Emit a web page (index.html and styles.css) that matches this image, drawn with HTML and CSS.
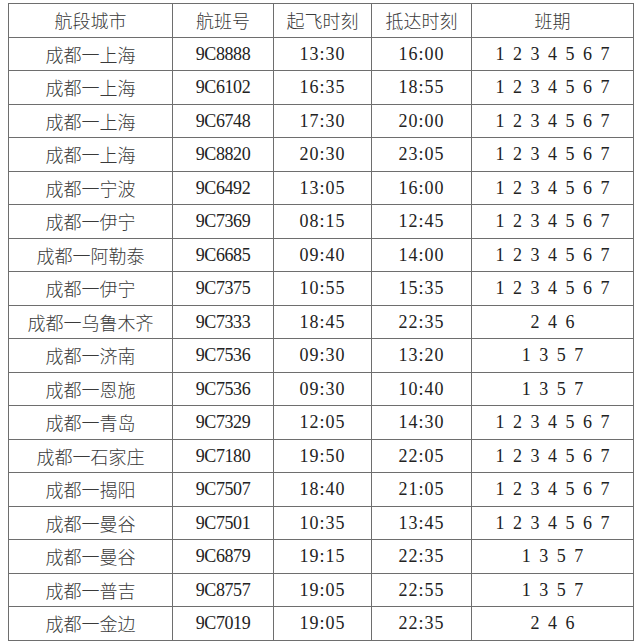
FILE: index.html
```html
<!DOCTYPE html>
<html lang="zh">
<head>
<meta charset="utf-8">
<link rel="stylesheet" href="styles.css">
</head>
<body>
<table class="schedule">
  <colgroup>
    <col class="c-route"><col class="c-flight"><col class="c-dep"><col class="c-arr"><col class="c-days">
  </colgroup>
  <thead>
    <tr><th>航段城市</th><th>航班号</th><th>起飞时刻</th><th>抵达时刻</th><th>班期</th></tr>
  </thead>
  <tbody>
    <tr><td class="cn">成都一上海</td><td class="num">9C8888</td><td class="time">13:30</td><td class="time">16:00</td><td class="days">1 2 3 4 5 6 7</td></tr>
    <tr><td class="cn">成都一上海</td><td class="num">9C6102</td><td class="time">16:35</td><td class="time">18:55</td><td class="days">1 2 3 4 5 6 7</td></tr>
    <tr><td class="cn">成都一上海</td><td class="num">9C6748</td><td class="time">17:30</td><td class="time">20:00</td><td class="days">1 2 3 4 5 6 7</td></tr>
    <tr><td class="cn">成都一上海</td><td class="num">9C8820</td><td class="time">20:30</td><td class="time">23:05</td><td class="days">1 2 3 4 5 6 7</td></tr>
    <tr><td class="cn">成都一宁波</td><td class="num">9C6492</td><td class="time">13:05</td><td class="time">16:00</td><td class="days">1 2 3 4 5 6 7</td></tr>
    <tr><td class="cn">成都一伊宁</td><td class="num">9C7369</td><td class="time">08:15</td><td class="time">12:45</td><td class="days">1 2 3 4 5 6 7</td></tr>
    <tr><td class="cn">成都一阿勒泰</td><td class="num">9C6685</td><td class="time">09:40</td><td class="time">14:00</td><td class="days">1 2 3 4 5 6 7</td></tr>
    <tr><td class="cn">成都一伊宁</td><td class="num">9C7375</td><td class="time">10:55</td><td class="time">15:35</td><td class="days">1 2 3 4 5 6 7</td></tr>
    <tr><td class="cn">成都一乌鲁木齐</td><td class="num">9C7333</td><td class="time">18:45</td><td class="time">22:35</td><td class="days">2 4 6</td></tr>
    <tr><td class="cn">成都一济南</td><td class="num">9C7536</td><td class="time">09:30</td><td class="time">13:20</td><td class="days">1 3 5 7</td></tr>
    <tr><td class="cn">成都一恩施</td><td class="num">9C7536</td><td class="time">09:30</td><td class="time">10:40</td><td class="days">1 3 5 7</td></tr>
    <tr><td class="cn">成都一青岛</td><td class="num">9C7329</td><td class="time">12:05</td><td class="time">14:30</td><td class="days">1 2 3 4 5 6 7</td></tr>
    <tr><td class="cn">成都一石家庄</td><td class="num">9C7180</td><td class="time">19:50</td><td class="time">22:05</td><td class="days">1 2 3 4 5 6 7</td></tr>
    <tr><td class="cn">成都一揭阳</td><td class="num">9C7507</td><td class="time">18:40</td><td class="time">21:05</td><td class="days">1 2 3 4 5 6 7</td></tr>
    <tr><td class="cn">成都一曼谷</td><td class="num">9C7501</td><td class="time">10:35</td><td class="time">13:45</td><td class="days">1 2 3 4 5 6 7</td></tr>
    <tr><td class="cn">成都一曼谷</td><td class="num">9C6879</td><td class="time">19:15</td><td class="time">22:35</td><td class="days">1 3 5 7</td></tr>
    <tr><td class="cn">成都一普吉</td><td class="num">9C8757</td><td class="time">19:05</td><td class="time">22:55</td><td class="days">1 3 5 7</td></tr>
    <tr><td class="cn">成都一金边</td><td class="num">9C7019</td><td class="time">19:05</td><td class="time">22:35</td><td class="days">2 4 6</td></tr>
  </tbody>
</table>
</body>
</html>
```

FILE: styles.css
```css
html, body {
  margin: 0;
  padding: 0;
  background: #ffffff;
}
body {
  padding: 3px 8px 0 8px;
  color: #222222;
  font-family: "Liberation Serif", "Noto Sans CJK SC", serif;
  font-size: 18px;
}
.schedule {
  border-collapse: collapse;
  table-layout: fixed;
  width: 625px;
}
.c-route { width: 164px; }
.c-flight { width: 101px; }
.c-dep { width: 98px; }
.c-arr { width: 100px; }
.c-days { width: 162px; }
.schedule th,
.schedule td {
  border: 1px solid #6e6e6e;
  height: 32.5px;
  padding: 0;
  text-align: center;
  vertical-align: middle;
  line-height: 20px;
  white-space: nowrap;
}
.schedule th {
  font-family: "Noto Sans CJK SC", sans-serif;
  font-weight: 300;
  font-size: 18px;
  color: #3a3a3a;
}
.cn {
  font-family: "Noto Sans CJK SC", sans-serif;
  font-weight: 300;
  font-size: 18px;
  color: #3a3a3a;
}
.num {
  font-family: "Liberation Serif", serif;
  letter-spacing: -0.4px;
}
.time {
  font-family: "Liberation Serif", serif;
  letter-spacing: 1px;
}
.days {
  font-family: "Liberation Serif", serif;
  word-spacing: 4px;
}
```
